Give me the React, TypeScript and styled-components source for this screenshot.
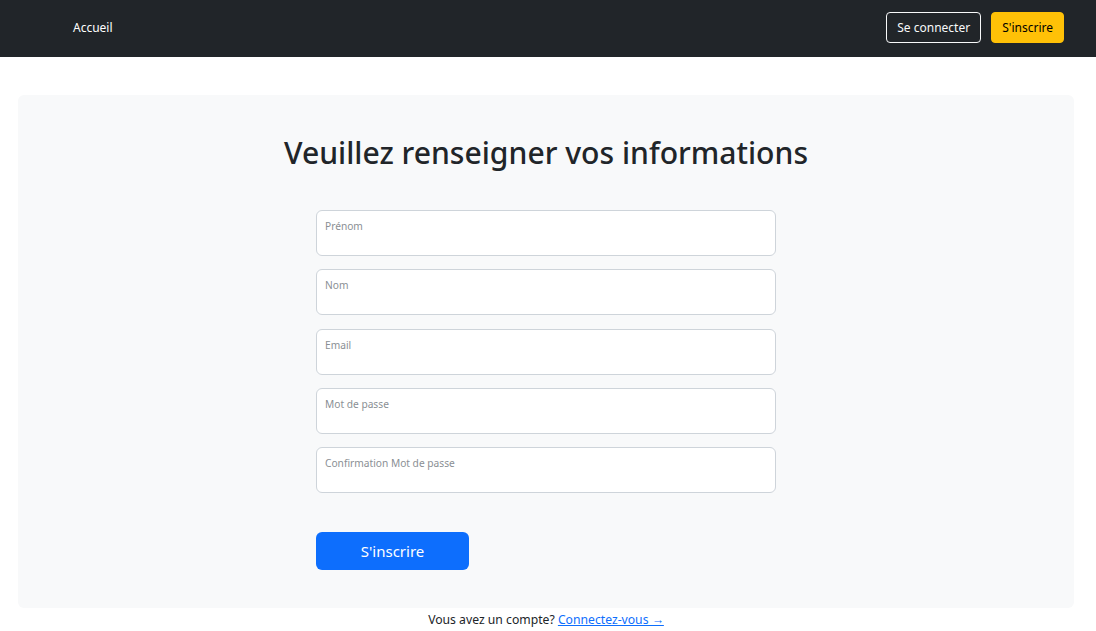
import React from "react";
import styled, { createGlobalStyle } from "styled-components";

const Global = createGlobalStyle`
  html, body { margin: 0; padding: 0; background: #fff; }
  body { font-family: "Noto Sans", "Open Sans", sans-serif; color: #212529; }
  * { box-sizing: border-box; }
`;

const Navbar = styled.nav`
  height: 57px;
  background: #212529;
  display: flex;
  align-items: center;
  justify-content: space-between;
  padding: 0 32px 2px 73px;
`;

const NavLink = styled.a`
  color: #fff;
  font-size: 12px;
  text-decoration: none;
`;

const NavActions = styled.div`
  display: flex;
  gap: 10px;
`;

const NavButton = styled.button<{ $variant: "outline" | "warning" }>`
  height: 31px;
  padding: 0 10px;
  font-family: inherit;
  font-size: 12px;
  border-radius: 4px;
  border: 1px solid ${(p) => (p.$variant === "outline" ? "#f8f9fa" : "#ffc107")};
  background: ${(p) => (p.$variant === "outline" ? "transparent" : "#ffc107")};
  color: ${(p) => (p.$variant === "outline" ? "#f8f9fa" : "#000")};
`;

const Card = styled.main`
  margin: 38px 22px 0 18px;
  background: #f8f9fa;
  border-radius: 6px;
  padding: 39px 0 38px;
  display: flex;
  flex-direction: column;
  align-items: center;
`;

const Title = styled.h1`
  margin: 0 0 38px;
  font-size: 30.1px;
  font-weight: 500;
  line-height: 38px;
  color: #212529;
`;

const Form = styled.form`
  width: 460px;
  display: flex;
  flex-direction: column;
  gap: 13.25px;
`;

const Field = styled.label`
  height: 46px;
  background: #fff;
  border: 1px solid #ced4da;
  border-radius: 6px;
  padding: 8px 8px;
  display: flex;
  align-items: flex-start;
  line-height: 14px;
`;

const FieldLabel = styled.span`
  font-size: 10.2px;
  color: #8a8f94;
  line-height: 14px;
`;

const Submit = styled.button`
  margin-top: 26px;
  width: 153px;
  height: 38px;
  background: #0d6efd;
  border: none;
  border-radius: 6px;
  color: #fff;
  font-family: inherit;
  font-size: 15px;
`;

const Footer = styled.p`
  margin: 3px 0 0;
  text-align: center;
  font-size: 12.2px;
  line-height: 18px;
  color: #212529;
  padding-right: 4px;
`;

const FooterLink = styled.a`
  color: #0d6efd;
  text-decoration: underline;
`;

const fields = ["Prénom", "Nom", "Email", "Mot de passe", "Confirmation Mot de passe"];

export default function App() {
  return (
    <>
      <Global />
      <Navbar>
        <NavLink href="#">Accueil</NavLink>
        <NavActions>
          <NavButton $variant="outline">Se connecter</NavButton>
          <NavButton $variant="warning">S'inscrire</NavButton>
        </NavActions>
      </Navbar>
      <Card>
        <Title>Veuillez renseigner vos informations</Title>
        <Form onSubmit={(e) => e.preventDefault()}>
          {fields.map((f) => (
            <Field key={f}>
              <FieldLabel>{f}</FieldLabel>
            </Field>
          ))}
          <div>
            <Submit type="submit">S'inscrire</Submit>
          </div>
        </Form>
      </Card>
      <Footer>
        Vous avez un compte? <FooterLink href="#">Connectez-vous →</FooterLink>
      </Footer>
    </>
  );
}
